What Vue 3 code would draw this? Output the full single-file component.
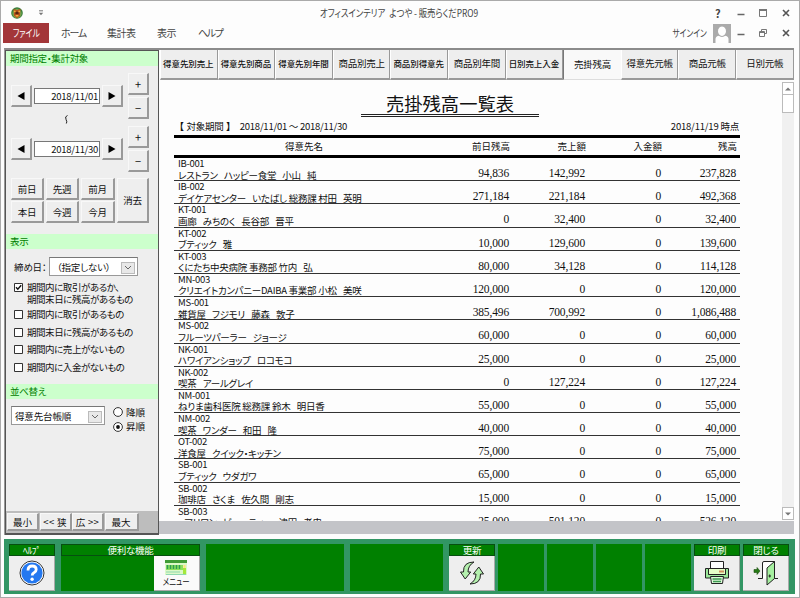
<script setup>
import { ref } from 'vue'

const menus = [
  { label: 'ホーム', cls: 'm-home' },
  { label: '集計表', cls: 'm-sum' },
  { label: '表示', cls: 'm-view' },
  { label: 'ヘルプ', cls: 'm-help' },
]
const tabs = [
  { label: '得意先別売上', small: true },
  { label: '得意先別商品', small: true },
  { label: '得意先別年間', small: true },
  { label: '商品別売上' },
  { label: '商品別得意先', small: true },
  { label: '商品別年間' },
  { label: '日別売上入金', small: true },
  { label: '売掛残高' },
  { label: '得意先元帳' },
  { label: '商品元帳' },
  { label: '日別元帳' },
]
const activeTab = ref('売掛残高')
const filters = ref([
  { text: ['期間内に取引があるか、', '期間末日に残高があるもの'], on: true },
  { text: ['期間内に取引があるもの'], on: false },
  { text: ['期間末日に残高があるもの'], on: false },
  { text: ['期間内に売上がないもの'], on: false },
  { text: ['期間内に入金がないもの'], on: false },
])
const rows = [
  ['IB-001', 'レストラン\u3000ハッピー食堂\u3000小山\u3000純', '94,836', '142,992', '0', '237,828'],
  ['IB-002', 'デイケアセンター\u3000いたばし 総務課 村田\u3000英明', '271,184', '221,184', '0', '492,368'],
  ['KT-001', '画廊\u3000みちのく\u3000長谷部\u3000晋平', '0', '32,400', '0', '32,400'],
  ['KT-002', 'ブティック\u3000雅', '10,000', '129,600', '0', '139,600'],
  ['KT-003', 'くにたち中央病院 事務部 竹内\u3000弘', '80,000', '34,128', '0', '114,128'],
  ['MN-003', 'クリエイトカンパニーDAIBA 事業部 小松\u3000美咲', '120,000', '0', '0', '120,000'],
  ['MS-001', '雑貨屋\u3000フジモリ\u3000藤森\u3000敦子', '385,496', '700,992', '0', '1,086,488'],
  ['MS-002', 'フルーツパーラー\u3000ジョージ', '60,000', '0', '0', '60,000'],
  ['NK-001', 'ハワイアンショップ\u3000ロコモコ', '25,000', '0', '0', '25,000'],
  ['NK-002', '喫茶\u3000アールグレイ', '0', '127,224', '0', '127,224'],
  ['NM-001', 'ねりま歯科医院 総務課 鈴木\u3000明日香', '55,000', '0', '0', '55,000'],
  ['NM-002', '喫茶\u3000ワンダー\u3000和田\u3000隆', '40,000', '0', '0', '40,000'],
  ['OT-002', '洋食屋\u3000クイック・キッチン', '75,000', '0', '0', '75,000'],
  ['SB-001', 'ブティック\u3000ウダガワ', '65,000', '0', '0', '65,000'],
  ['SB-002', '珈琲店\u3000さくま\u3000佐久間\u3000剛志', '15,000', '0', '0', '15,000'],
  ['SB-003', '\u3000アリワン\u3000ビューティー\u3000津田\u3000孝史', '25,000', '501,120', '0', '526,120'],
]
// Wide spaces are separated out so they can be set tighter than the words.
const pieces = (name) => name.split(/(\u3000)/).filter(Boolean)
</script>

<template>
  <div class="window">
    <header class="titlebar">
      <svg class="logo" viewBox="0 0 12 12">
        <circle cx="6" cy="6" r="5.8" fill="#3c7d3c" />
        <circle cx="6" cy="6.4" r="4.6" fill="#6fae52" />
        <path d="M2.400 2.200h1.800l1.800 1 1.800-1h1.800l-.4 3.600v3L6 11.200 2.800 8.800v-3z" fill="#b5541f" />
        <path d="M4.400 4.800h3.200v2.400H4.400z" fill="#5a2410" />
        <path d="M4.600 8h2.800v1.500H4.600z" fill="#f2b13c" />
        <circle cx="3.800" cy="4.400" r=".9" fill="#f2b13c" /><circle cx="8.200" cy="4.400" r=".9" fill="#f2b13c" />
      </svg>
      <svg class="quick" viewBox="0 0 6 6"><path d="M1 .8h4" stroke="#777" /><path d="M.8 2.800h4.400L3 5.200z" fill="#777" /></svg>
      <h1>オフィスインテリア&ensp;よつや - 販売らくだPRO9</h1>
      <div class="controls">
        <b>?</b>
        <svg viewBox="0 0 10 10"><path d="M1.500 6.500h7" stroke="#666" stroke-width="1.500" /></svg>
        <svg viewBox="0 0 10 10"><path d="M1.500 1.500h7v7h-7z" fill="none" stroke="#777" /><path d="M1 2h8" stroke="#777" stroke-width="2" /></svg>
        <svg viewBox="0 0 10 10"><path d="M2 2l6 6M8 2l-6 6" stroke="#555" stroke-width="1.600" /></svg>
      </div>
    </header>

    <nav class="menubar">
      <button class="file"><span class="squeeze">ファイル</span></button>
      <span v-for="m in menus" :key="m.label" class="menu" :class="m.cls">{{ m.label }}</span>
      <span class="signin">サインイン</span>
      <svg class="avatar" viewBox="0 0 18 19">
        <path d="M0 0h18v19H0z" fill="#ababab" />
        <path d="M2.500 19v-4q0-2.500 3-3.300h7q3 .8 3 3.300V19z" fill="#fff" />
        <ellipse cx="9" cy="7.200" rx="4.600" ry="5.300" fill="#fff" stroke="#ababab" stroke-width="1.200" />
      </svg>
      <div class="controls sub">
        <svg viewBox="0 0 10 10"><path d="M1.500 6.500h7" stroke="#666" stroke-width="1.500" /></svg>
        <svg viewBox="0 0 10 10"><path d="M3.500 3.500v-2h5v4h-2M1.500 3.500h5v5h-5zM1.500 4.500h5" fill="none" stroke="#777" /></svg>
        <svg viewBox="0 0 10 10"><path d="M2 2l6 6M8 2l-6 6" stroke="#555" stroke-width="1.600" /></svg>
      </div>
    </nav>

    <main class="body">
      <aside class="sidebar">
        <h2>期間指定・集計対象</h2>
        <section class="period">
          <div v-for="d in ['2018/11/01', '2018/11/30']" :key="d" class="date-row">
            <button class="btn step"><svg viewBox="0 0 8 8"><path d="M7.500 0v8L.5 4z" /></svg></button>
            <div class="date">{{ d }}</div>
            <button class="btn step"><svg viewBox="0 0 8 8"><path d="M.5 0v8l7-4z" /></svg></button>
            <div class="pm"><button class="btn">+</button><button class="btn">−</button></div>
          </div>
          <svg class="tilde" viewBox="0 0 5 9"><path d="M3.500.5Q.5 1.500 2 4.300T2.300 8.500" fill="none" stroke="#222" /></svg>
          <div class="presets">
            <button class="btn">前日</button><button class="btn">先週</button><button class="btn">前月</button>
            <button class="btn clear">消去</button>
            <button class="btn">本日</button><button class="btn">今週</button><button class="btn">今月</button>
          </div>
        </section>

        <h2>表示</h2>
        <section class="display">
          <div class="closing">
            <span>締め日：</span>
            <div class="select"><span class="val">（指定しない）</span><i><svg viewBox="0 0 8 5"><path d="M1 1l3 3 3-3" fill="none" stroke="#666" /></svg></i></div>
          </div>
          <label v-for="f in filters" :key="f.text[0]" class="check">
            <svg viewBox="0 0 9 9"><path d="M.5.5h8v8h-8z" fill="#fff" stroke="#333" /><path v-if="f.on" d="M2 4.200l1.800 2L7.200 2.200" fill="none" stroke="#111" stroke-width="1.400" /></svg>
            <span><template v-for="(t, i) in f.text" :key="t"><br v-if="i">{{ t }}</template></span>
          </label>
        </section>

        <h2>並べ替え</h2>
        <section class="sort">
          <div class="select wide"><span class="val">得意先台帳順</span><i><svg viewBox="0 0 8 5"><path d="M1 1l3 3 3-3" fill="none" stroke="#666" /></svg></i></div>
          <div class="radios">
            <label><svg viewBox="0 0 10 10"><circle cx="5" cy="5" r="4.400" fill="#fff" stroke="#333" /></svg>降順</label>
            <label><svg viewBox="0 0 10 10"><circle cx="5" cy="5" r="4.400" fill="#fff" stroke="#333" /><circle cx="5" cy="5" r="1.900" fill="#111" /></svg>昇順</label>
          </div>
        </section>
        <div class="sizer">
          <button class="btn">最小</button><button class="btn chev">&lt;&lt; 狭</button><button class="btn chev">広 &gt;&gt;</button><button class="btn">最大</button>
        </div>
      </aside>

      <section class="content">
        <div class="tabs">
          <button v-for="t in tabs" :key="t.label" class="tab" :class="{ small: t.small, active: t.label === activeTab }" @click="activeTab = t.label">{{ t.label }}</button>
        </div>
        <div class="viewport">
          <article class="report">
            <h3>売掛残高一覧表</h3>
            <div class="meta"><span class="range"><b>【</b> 対象期間 <b>】</b><span class="span">2018/11/01 ～ 2018/11/30</span></span><span class="asof">2018/11/19 時点</span></div>
            <div class="row head"><span>得意先名</span><span>前日残高</span><span>売上額</span><span>入金額</span><span>残高</span></div>
            <div v-for="r in rows" :key="r[0]" class="row">
              <div class="who"><div class="code">{{ r[0] }}</div><div class="name"><span v-for="(p, i) in pieces(r[1])" :key="i" :class="{ gap: p === '\u3000' }">{{ p }}</span></div></div>
              <span v-for="c in 4" :key="c" class="num">{{ r[c + 1] }}</span>
            </div>
          </article>
          <div class="scroll">
            <span class="arrow"><svg viewBox="0 0 6 4"><path d="M0 3.500h6L3 .5z" fill="#777" /></svg></span>
            <span class="thumb"></span>
            <span class="arrow end"><svg viewBox="0 0 6 4"><path d="M0 .5h6L3 3.500z" fill="#777" /></svg></span>
          </div>
        </div>
        <div class="hbar"></div>
      </section>
    </main>

    <footer class="dock">
      <div class="slot">
        <div class="cap">ﾍﾙﾌﾟ</div>
        <button class="tool">
          <svg width="26" height="26" viewBox="0 0 26 26">
            <circle cx="13" cy="13" r="12" fill="#fff" stroke="#333" /><circle cx="13" cy="13" r="10.600" fill="#2478f0" />
            <path d="M9 10.500q0-4.500 4.200-4.500 4 0 4 3.400 0 1.900-2 3-2 1-2 3.200" fill="none" stroke="#fff" stroke-width="2.800" /><circle cx="13.100" cy="19.200" r="1.700" fill="#fff" />
          </svg>
        </button>
      </div>
      <div class="slot apart">
        <div class="cap">便利な機能</div>
        <button class="tool menu-tool">
          <svg width="23" height="16" viewBox="0 0 23 16">
            <path d="M0 0h22v3H0z" fill="#3f9c35" /><path d="M0 3h22v12H0z" fill="#dcf8c8" />
            <path d="M1 5h17v5H1z" fill="#8be05c" />
            <path d="M2.500 5v4M5.500 5v4M8.500 5v4M11.500 5v4M14.500 5v4" stroke="#2f9b55" stroke-width="1.500" />
            <path d="M1 12h14M1 14.500h20" stroke="#8fd8b0" /><path d="M18 8h3v6h-3z" fill="#a4e83a" /><path d="M18.500 5h2v3h-2z" fill="#ffe27a" />
          </svg>
          <span class="squeeze">メニュー</span>
        </button>
      </div>
      <div class="slot apart"></div>
      <div class="slot apart"></div>
      <div class="slot apart">
        <div class="cap">更新</div>
        <button class="tool">
          <svg width="24" height="24" viewBox="0 0 24 24" fill="#b4f0ae" stroke="#222" stroke-linejoin="round">
            <path d="M14 1Q3 1 3.500 11H.5l4.700 7 5.500-7H8Q8 4.500 14 1z" /><path d="M10 23q11 0 10.500-10h3l-4.700-7-5.500 7h2.700q0 6.500-6 10z" />
          </svg>
        </button>
      </div>
      <div class="slot"></div><div class="slot"></div><div class="slot"></div><div class="slot"></div>
      <div class="slot">
        <div class="cap">印刷</div>
        <button class="tool">
          <svg width="24" height="24" viewBox="0 0 24 24" stroke="#222">
            <path d="M5.500 8V.5h13V8" fill="#fff" /><path d="M3.500 7.500h17l1.500 6H2z" fill="#e6ffc8" />
            <path d="M.5 7.500h3v6h17v-6h3v9.500h-23z" fill="#9be79a" /><path d="M14 10.500h5" stroke="#d09060" stroke-width="2" />
            <path d="M5.500 15.500h13l-1 7h-11z" fill="#dff8da" /><path d="M7.500 18h9M8 20.500h8" stroke="#3c9a50" stroke-width="1.500" />
          </svg>
        </button>
      </div>
      <div class="slot">
        <div class="cap">閉じる</div>
        <button class="tool">
          <svg width="26" height="26" viewBox="0 0 26 26" stroke="#222">
            <path d="M5 18.500h4.500V3q0-1.500 1.500-1.500h10.500v17H25" fill="#fff" /><path d="M14 8l7.500-6.500v17L14 25z" fill="#a6f0a0" />
            <path d="M15.500 16h2.500M16.700 14.500v3" /><path d="M1 9.500h3v-2l3 3.500-3 3.500v-2H1z" fill="#267a16" stroke="#1d4d10" stroke-width=".6" />
          </svg>
        </button>
      </div>
    </footer>
  </div>
</template>

<style>
body { overflow: hidden; background: #fff; }
</style>

<style scoped>
* { box-sizing: border-box; }
.window { width: 800px; height: 598px; border: 1px solid #aaa; background: #fdfdfd; display: flex; flex-direction: column; font-family: "Noto Sans CJK JP", sans-serif; font-size: 9.500px; line-height: 12px; color: #111; font-feature-settings: "palt"; white-space: nowrap; overflow: hidden; }
button { font: inherit; font-feature-settings: inherit; color: inherit; padding: 0; margin: 0; border: 0; letter-spacing: inherit; white-space: nowrap; }
h1, h2, h3 { margin: 0; font-weight: 400; font-size: inherit; }
svg { display: block; flex: none; }

.titlebar { height: 22px; flex: none; display: flex; align-items: center; padding: 1px 8px 0 10px; color: #444; }
.logo { width: 12px; height: 12px; }
.quick { width: 6px; height: 6px; margin-left: 15px; }
.titlebar h1 { margin-left: 276px; width: 188px; margin-right: -28px; font-size: 10px; letter-spacing: -.100px; transform: scaleX(.842); transform-origin: left; }
.controls { margin-left: auto; display: grid; grid-template-columns: repeat(4, 10px); column-gap: 12.700px; align-items: center; text-align: center; }
.controls svg { width: 10px; height: 10px; }
.controls b { font-size: 11px; }
.controls.sub { grid-template-columns: repeat(3, 10px); margin-left: 5px; }

.menubar { height: 20px; flex: none; display: flex; align-items: center; padding: 0 8px 0 2px; color: #444; font-size: 10px; }
.file { width: 46px; height: 20px; background: #a33639; color: #fff; }
.squeeze { display: inline-block; transform: scaleX(.78); }
.menu { flex: none; letter-spacing: -.500px; }
.m-home { margin-left: 12px; width: 46px; letter-spacing: -1.200px; }
.m-sum { width: 50px; }
.m-view { width: 41px; }
.m-help { letter-spacing: -1.500px; }
.signin { margin-left: auto; margin-right: 6px; transform: scaleX(.77); transform-origin: right; }
.avatar { width: 18px; height: 19px; }

.body { height: 487px; flex: none; margin: 5px 5px 0 3px; display: flex; border-top: 2px solid #8c8c8c; border-left: 1px solid #999; }
.sidebar { width: 154px; flex: none; background: #eee; border: 1px solid #555; border-width: 1px 1px 2px 1px; display: flex; flex-direction: column; }
.sidebar h2 { height: 15px; flex: none; line-height: 14px; background: #cfc; color: #008000; padding-left: 4px; letter-spacing: -.300px; }
.period { height: 168px; flex: none; padding: 7px 0 0 5px; display: grid; grid-template-columns: 1fr; grid-template-rows: 53px 52px 46px; align-content: start; letter-spacing: -.300px; }
.btn { background: #eee; border: 1px solid #f8f8f8; border-right: 2px solid #999; border-bottom: 2px solid #999; display: flex; align-items: center; justify-content: center; }
.date-row { height: 46px; display: flex; align-items: center; }
.step { width: 21px; height: 22px; }
.step svg { width: 8px; height: 8px; }
.date { width: 66px; height: 16px; margin: 0 2px; background: #fff; border: 1px solid #777; text-align: right; line-height: 14px; letter-spacing: -.300px; padding-right: 1px; }
.pm { margin-left: 5px; display: grid; grid-template-rows: 22px 22px; row-gap: 2px; grid-template-columns: 21px; }
.pm .btn { font-size: 11px; }
.tilde { position: absolute; left: 64px; top: 115px; width: 5px; height: 9px; }
.presets { display: grid; grid-template-columns: 33px 33px 34px 32px; column-gap: 2px; grid-template-rows: 22px 22px; row-gap: 1px; }
.clear { grid-column: 4; grid-row: 1 / 3; }
.display { height: 135px; flex: none; padding: 8px 0 0 8px; }
.closing { display: flex; align-items: center; margin-bottom: 7px; letter-spacing: -.200px; }
.closing > span { width: 35px; }
.select { width: 89px; height: 19px; border: 1px solid #999; border-top-color: #777; background: #fff; display: flex; align-items: center; justify-content: space-between; padding: 0 2px 0 7px; }
.select i { width: 14px; height: 12px; margin-top: 2px; border: 1px solid #bbb; background: #e8e8e8; display: flex; align-items: center; justify-content: center; }
.select i svg { width: 8px; height: 5px; }
.wide { width: 94px; padding-left: 3px; letter-spacing: -.150px; }
.check { display: flex; gap: 4px; line-height: 11.500px; margin-bottom: 6px; letter-spacing: -.450px; }
.closing + .check { margin-bottom: 4px; margin-top: -1px; }
.check svg { width: 9px; height: 9px; margin-top: 1px; }
.sort { flex: 1; display: flex; align-items: flex-start; padding: 7px 0 0 5px; }
.radios { margin-left: 8px; padding-top: 1px; }
.radios label { display: flex; align-items: center; gap: 3px; line-height: 13px; height: 14.500px; margin-top: -2px; margin-bottom: 2px; }
.radios svg { width: 10px; height: 10px; }
.sizer { height: 22px; flex: none; background: #bdbdbd; padding: 2px 0 0 1px; display: grid; grid-template-columns: 32px 32px 32px 34px; column-gap: 0.500px; grid-template-rows: 18px; }
.chev { letter-spacing: .300px; }

.content { flex: 1; display: flex; flex-direction: column; min-width: 0; }
.tabs { display: grid; grid-template-columns: repeat(11, 57.600px); height: 30px; flex: none; padding-left: 1px; }
.tab { background: #eee; border-left: 1px solid #fff; border-right: 1px solid #999; border-bottom: 2px solid #999; padding-bottom: 2px; text-align: center; letter-spacing: -.250px; }
.tab.small { font-size: 8.500px; letter-spacing: -.100px; font-weight: 500; padding-right: 1px; }
.tab.active { background: #f9f9f9; border-left: 1px solid #777; border-right: 0; border-bottom: 1px solid #ddd; }
.viewport { height: 441px; flex: none; display: flex; overflow: hidden; background: #fdfdfd; }
.report { width: 623px; flex: none; padding: 12px 0 0 15px; }
.report h3 { width: 178px; height: 25px; margin-left: 187px; text-align: center; font-size: 18.300px; line-height: 22px; border-bottom: 3px double #222; color: #111; }
.report .meta { width: 566px; height: 18px; display: flex; justify-content: space-between; line-height: 18px; padding: 0 1px 0 4px; }
.range { letter-spacing: -.250px; }
.range b { margin: 0 1px; }
.range .span { margin-left: 8px; }
.asof { letter-spacing: -.200px; }
.row { width: 566px; height: 23.190px; display: grid; grid-template-columns: 259px 76px 76px 76px 75px; border-bottom: 1px solid #333; }
.row.head { height: 23px; border: 0 solid #000; border-width: 3px 0; line-height: 17px; }
.head span { text-align: right; margin-right: -1px; }
.head span:first-child { text-align: center; }
.who { line-height: 11.500px; padding-left: 4px; }
.code { letter-spacing: -.300px; }
.name { letter-spacing: -.250px; }
.name .gap { letter-spacing: -3.300px; }
.num { text-align: right; font-family: "Liberation Serif", serif; font-size: 11.500px; line-height: 30px; letter-spacing: -.150px; }
.scroll { width: 13px; background: #f0f0f0; margin: 2px 0 1px; display: flex; flex-direction: column; }
.arrow { height: 13px; border: 1px solid #bbb; background: #fff; display: flex; align-items: center; justify-content: center; }
.arrow svg { width: 6px; height: 4px; }
.arrow.end { margin-top: auto; }
.thumb { height: 18px; border: 1px solid #bbb; background: #fff; border-top: 0; }
.hbar { height: 13px; background: #c3c4c8; }

.dock { height: 55px; flex: none; margin: 4px 4px 0 3px; padding: 5px; background: #329664; display: flex; gap: 3px; }
.slot { width: 46px; height: 47px; flex: none; background: #008000; color: #fff; display: flex; flex-direction: column; }
.apart { margin-left: 3px; }
.slot:nth-child(2) { width: 139px; }
.slot:nth-child(3) { width: 138px; }
.slot:nth-child(4) { width: 93px; }
.cap { height: 12px; flex: none; border: 1px solid #064f10; text-align: center; line-height: 10px; letter-spacing: -.300px; }
.tool { flex: 1; width: 100%; background: #eee; border-right: 1px solid #aaa; border-bottom: 1px solid #aaa; display: flex; flex-direction: column; align-items: center; justify-content: center; color: #111; }
.menu-tool { width: 46px; align-self: flex-end; background: #fafafa; line-height: 10px; }
</style>
